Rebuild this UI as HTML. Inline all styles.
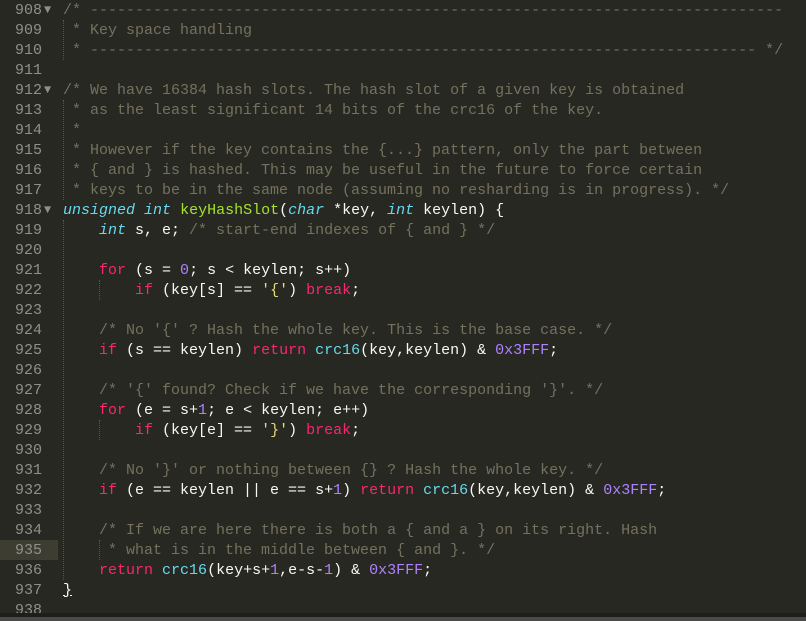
<!DOCTYPE html>
<html><head><meta charset="utf-8"><style>
body{margin:0;width:806px;height:621px;background:#272822;overflow:hidden;position:relative;font-family:"Liberation Mono",monospace;font-size:15px;}
.l{position:absolute;left:0;height:20px;line-height:21px;width:806px;white-space:pre;}
.n{position:absolute;left:0;width:42px;text-align:right;color:#90908a;}
.f{position:absolute;left:44px;top:0;color:#90908a;font-size:12px;}
.t{position:absolute;left:63px;color:#f8f8f2;}
.c{color:#75715e}.k{color:#f92672}.s{color:#66d9ef;font-style:italic}.g{color:#a6e22e}.p{color:#ae81ff}.y{color:#e6db74}.b{color:#66d9ef}
.gd{position:absolute;width:0;border-left:1px dotted #555548;}
</style></head><body>
<div style="position:absolute;left:0;top:540px;width:58px;height:20px;background:#3e3d32"></div>
<div class="gd" style="left:63px;top:20px;height:40px"></div>
<div class="gd" style="left:63px;top:100px;height:100px"></div>
<div class="gd" style="left:63px;top:220px;height:360px"></div>
<div class="gd" style="left:99px;top:280px;height:20px"></div>
<div class="gd" style="left:99px;top:420px;height:20px"></div>
<div class="gd" style="left:99px;top:540px;height:20px"></div>

<div class="l" style="top:0"><span class="n">908</span><span class="f">▼</span><span class="t c">/* -----------------------------------------------------------------------------</span></div>
<div class="l" style="top:20px"><span class="n">909</span><span class="t c"> * Key space handling</span></div>
<div class="l" style="top:40px"><span class="n">910</span><span class="t c"> * -------------------------------------------------------------------------- */</span></div>
<div class="l" style="top:60px"><span class="n">911</span></div>
<div class="l" style="top:80px"><span class="n">912</span><span class="f">▼</span><span class="t c">/* We have 16384 hash slots. The hash slot of a given key is obtained</span></div>
<div class="l" style="top:100px"><span class="n">913</span><span class="t c"> * as the least significant 14 bits of the crc16 of the key.</span></div>
<div class="l" style="top:120px"><span class="n">914</span><span class="t c"> *</span></div>
<div class="l" style="top:140px"><span class="n">915</span><span class="t c"> * However if the key contains the {...} pattern, only the part between</span></div>
<div class="l" style="top:160px"><span class="n">916</span><span class="t c"> * { and } is hashed. This may be useful in the future to force certain</span></div>
<div class="l" style="top:180px"><span class="n">917</span><span class="t c"> * keys to be in the same node (assuming no resharding is in progress). */</span></div>
<div class="l" style="top:200px"><span class="n">918</span><span class="f">▼</span><span class="t"><span class="s">unsigned</span> <span class="s">int</span> <span class="g">keyHashSlot</span>(<span class="s">char</span> *key, <span class="s">int</span> keylen) {</span></div>
<div class="l" style="top:220px"><span class="n">919</span><span class="t">    <span class="s">int</span> s, e; <span class="c">/* start-end indexes of { and } */</span></span></div>
<div class="l" style="top:240px"><span class="n">920</span></div>
<div class="l" style="top:260px"><span class="n">921</span><span class="t">    <span class="k">for</span> (s = <span class="p">0</span>; s &lt; keylen; s++)</span></div>
<div class="l" style="top:280px"><span class="n">922</span><span class="t">        <span class="k">if</span> (key[s] == <span class="y">'{'</span>) <span class="k">break</span>;</span></div>
<div class="l" style="top:300px"><span class="n">923</span></div>
<div class="l" style="top:320px"><span class="n">924</span><span class="t">    <span class="c">/* No '{' ? Hash the whole key. This is the base case. */</span></span></div>
<div class="l" style="top:340px"><span class="n">925</span><span class="t">    <span class="k">if</span> (s == keylen) <span class="k">return</span> <span class="b">crc16</span>(key,keylen) &amp; <span class="p">0x3FFF</span>;</span></div>
<div class="l" style="top:360px"><span class="n">926</span></div>
<div class="l" style="top:380px"><span class="n">927</span><span class="t">    <span class="c">/* '{' found? Check if we have the corresponding '}'. */</span></span></div>
<div class="l" style="top:400px"><span class="n">928</span><span class="t">    <span class="k">for</span> (e = s+<span class="p">1</span>; e &lt; keylen; e++)</span></div>
<div class="l" style="top:420px"><span class="n">929</span><span class="t">        <span class="k">if</span> (key[e] == <span class="y">'}'</span>) <span class="k">break</span>;</span></div>
<div class="l" style="top:440px"><span class="n">930</span></div>
<div class="l" style="top:460px"><span class="n">931</span><span class="t">    <span class="c">/* No '}' or nothing between {} ? Hash the whole key. */</span></span></div>
<div class="l" style="top:480px"><span class="n">932</span><span class="t">    <span class="k">if</span> (e == keylen || e == s+<span class="p">1</span>) <span class="k">return</span> <span class="b">crc16</span>(key,keylen) &amp; <span class="p">0x3FFF</span>;</span></div>
<div class="l" style="top:500px"><span class="n">933</span></div>
<div class="l" style="top:520px"><span class="n">934</span><span class="t">    <span class="c">/* If we are here there is both a { and a } on its right. Hash</span></span></div>
<div class="l" style="top:540px"><span class="n">935</span><span class="t">    <span class="c"> * what is in the middle between { and }. */</span></span></div>
<div class="l" style="top:560px"><span class="n">936</span><span class="t">    <span class="k">return</span> <span class="b">crc16</span>(key+s+<span class="p">1</span>,e-s-<span class="p">1</span>) &amp; <span class="p">0x3FFF</span>;</span></div>
<div class="l" style="top:580px"><span class="n">937</span><span class="t" style="text-decoration:underline">}</span></div>
<div class="l" style="top:600px"><span class="n">938</span></div>
<div style="position:absolute;left:0;top:613px;width:806px;height:4px;background:#1e1f1c"></div>
<div style="position:absolute;left:0;top:617px;width:806px;height:4px;background:#4a4a4a"></div>
</body></html>
